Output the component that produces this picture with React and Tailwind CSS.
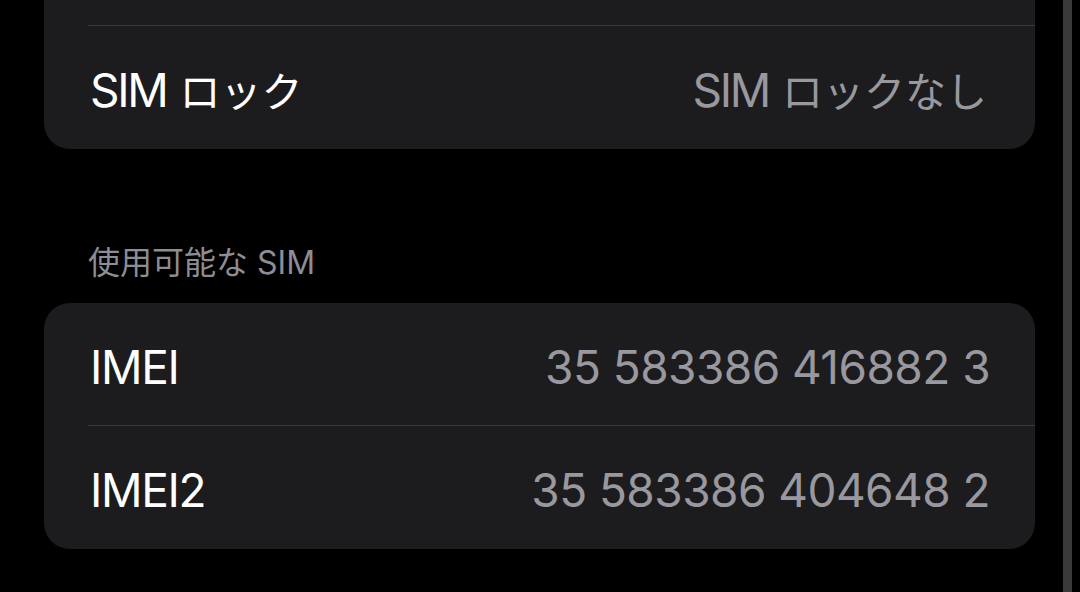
export default function App() {
  const font = { fontFamily: 'Inter, "Noto Sans CJK JP", sans-serif' };

  return (
    <div className="flex h-[592px] w-[1080px] overflow-hidden bg-black" style={font}>
      <div className="flex-1 pl-[44px]">
        {/* carrier card, top row scrolled off */}
        <div className="-mt-[98px] overflow-hidden rounded-[26px] bg-[#1c1c1e]">
          <div className="h-[123px]" />
          <div className="ml-[44px] border-t border-[#38383a]" />
          <div className="flex h-[123px] items-center justify-between pl-[46px] pr-[48px] pt-[6px]">
            <span className="text-[46px] text-white">
              <span className="tracking-[-0.05em]">SIM</span>
              <span className="ml-[13px] text-[41px]">ロック</span>
            </span>
            <span className="text-[46px] text-[#98989e]">
              <span className="tracking-[-0.05em]">SIM</span>
              <span className="ml-[13px] text-[41px]">ロックなし</span>
            </span>
          </div>
        </div>

        <div className="mt-[94px] pl-[44px] text-[32px] leading-[40px] text-[#8d8d93]">
          使用可能な<span className="ml-[9px]">SIM</span>
        </div>

        <div className="mt-[20px] overflow-hidden rounded-[26px] bg-[#1c1c1e]">
          <div className="flex h-[122px] items-center justify-between pl-[46px] pr-[45px] pt-[6px]">
            <span className="text-[46px] tracking-[-0.03em] text-white">IMEI</span>
            <span className="text-[46px] tracking-[-0.012em] text-[#98989e]">35 583386 416882 3</span>
          </div>
          <div className="ml-[44px] border-t border-[#38383a]" />
          <div className="flex h-[123px] items-center justify-between pl-[46px] pr-[45px] pt-[6px]">
            <span className="text-[46px] tracking-[-0.03em] text-white">IMEI2</span>
            <span className="text-[46px] tracking-[-0.012em] text-[#98989e]">35 583386 404648 2</span>
          </div>
        </div>
      </div>
      {/* scroll indicator */}
      <div className="ml-[28px] mr-[8px] w-[9px] bg-[#3a3a3c]" />
    </div>
  );
}
